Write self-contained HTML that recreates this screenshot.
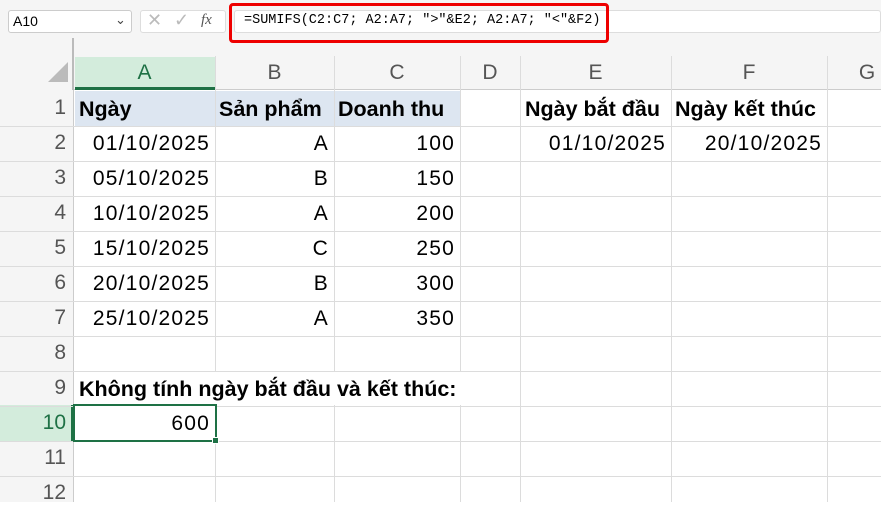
<!DOCTYPE html>
<html><head><meta charset="utf-8"><style>
body{margin:0;width:881px;height:502px;overflow:hidden;background:#fff;font-family:"Liberation Sans",sans-serif;position:relative}
.a{position:absolute;box-sizing:border-box}
.t{position:absolute;font-size:21px;line-height:36px;white-space:nowrap;color:#000;letter-spacing:1.2px}
.b{font-weight:bold;letter-spacing:0;font-size:21.5px}
.h{position:absolute;font-size:21px;color:#555;text-align:center;line-height:34px}
</style></head><body>
<div class="a" style="left:0;top:0;width:881px;height:56px;background:#f5f5f5"></div>
<div class="a" style="left:8px;top:10px;width:124px;height:23px;background:#fff;border:1px solid #ccc;border-radius:3px"></div>
<div class="t" style="left:13px;top:4px;font-size:14px;line-height:34px;letter-spacing:0">A10</div>
<div class="t" style="left:115px;top:3px;font-size:13px;line-height:34px;color:#444;letter-spacing:0">&#8964;</div>
<div class="a" style="left:140px;top:10px;width:86px;height:23px;background:#fff;border:1px solid #ddd;border-radius:3px"></div>
<div class="t" style="left:147px;top:3px;font-size:18px;line-height:34px;color:#bbb;letter-spacing:0">✕</div>
<div class="t" style="left:174px;top:3px;font-size:18px;line-height:34px;color:#bbb;letter-spacing:0">✓</div>
<div class="t" style="left:201px;top:3px;font-size:15px;line-height:34px;color:#555;font-style:italic;font-family:'Liberation Serif',serif;letter-spacing:0">fx</div>
<div class="a" style="left:234px;top:10px;width:647px;height:23px;background:#fff;border:1px solid #ddd;border-radius:3px"></div>
<div class="a" style="left:229px;top:3px;width:380px;height:40px;border:3px solid #e00;border-radius:4px"></div>
<div class="t" style="left:244px;top:4px;font-size:13.5px;line-height:34px;font-family:'Liberation Mono',monospace;letter-spacing:0">=SUMIFS(C2:C7; A2:A7; "&gt;"&amp;E2; A2:A7; "&lt;"&amp;F2)</div>
<div class="a" style="left:0;top:56px;width:881px;height:34px;background:#f5f5f5;border-bottom:1px solid #ccc"></div>
<div class="a" style="left:0;top:56px;width:74px;height:446px;background:#f5f5f5;border-right:1px solid #ccc"></div>
<div class="a" style="left:72px;top:38px;width:2px;height:52px;background:#bbb"></div>
<div class="a" style="left:48px;top:62px;width:0;height:0;border-left:20px solid transparent;border-bottom:20px solid #bbb"></div>
<div class="a" style="left:75px;top:57px;width:140px;height:33px;background:#d3ecdc;border-bottom:3px solid #1e7145"></div>
<div class="a" style="left:0;top:405px;width:74px;height:36px;background:#d3ecdc;border-right:3px solid #1e7145"></div>
<div class="a" style="left:75px;top:91px;width:385px;height:35px;background:#dde6f1"></div>
<div class="h" style="left:74px;top:56px;width:141px;color:#1e7145">A</div>
<div class="h" style="left:215px;top:56px;width:119px">B</div>
<div class="h" style="left:334px;top:56px;width:126px">C</div>
<div class="h" style="left:460px;top:56px;width:60px">D</div>
<div class="h" style="left:520px;top:56px;width:151px">E</div>
<div class="h" style="left:671px;top:56px;width:156px">F</div>
<div class="h" style="left:827px;top:56px;width:80px">G</div>
<div class="a" style="left:215px;top:56px;width:1px;height:446px;background:#dcdcdc"></div>
<div class="a" style="left:334px;top:56px;width:1px;height:446px;background:#dcdcdc"></div>
<div class="a" style="left:460px;top:56px;width:1px;height:446px;background:#dcdcdc"></div>
<div class="a" style="left:520px;top:56px;width:1px;height:446px;background:#dcdcdc"></div>
<div class="a" style="left:671px;top:56px;width:1px;height:446px;background:#dcdcdc"></div>
<div class="a" style="left:827px;top:56px;width:1px;height:446px;background:#dcdcdc"></div>
<div class="a" style="left:0;top:126px;width:881px;height:1px;background:#dcdcdc"></div>
<div class="a" style="left:0;top:161px;width:881px;height:1px;background:#dcdcdc"></div>
<div class="a" style="left:0;top:196px;width:881px;height:1px;background:#dcdcdc"></div>
<div class="a" style="left:0;top:231px;width:881px;height:1px;background:#dcdcdc"></div>
<div class="a" style="left:0;top:266px;width:881px;height:1px;background:#dcdcdc"></div>
<div class="a" style="left:0;top:301px;width:881px;height:1px;background:#dcdcdc"></div>
<div class="a" style="left:0;top:336px;width:881px;height:1px;background:#dcdcdc"></div>
<div class="a" style="left:0;top:371px;width:881px;height:1px;background:#dcdcdc"></div>
<div class="a" style="left:0;top:406px;width:881px;height:1px;background:#dcdcdc"></div>
<div class="a" style="left:0;top:441px;width:881px;height:1px;background:#dcdcdc"></div>
<div class="a" style="left:0;top:476px;width:881px;height:1px;background:#dcdcdc"></div>
<div class="h" style="left:0;top:91px;width:66px;text-align:right">1</div>
<div class="h" style="left:0;top:126px;width:66px;text-align:right">2</div>
<div class="h" style="left:0;top:161px;width:66px;text-align:right">3</div>
<div class="h" style="left:0;top:196px;width:66px;text-align:right">4</div>
<div class="h" style="left:0;top:231px;width:66px;text-align:right">5</div>
<div class="h" style="left:0;top:266px;width:66px;text-align:right">6</div>
<div class="h" style="left:0;top:301px;width:66px;text-align:right">7</div>
<div class="h" style="left:0;top:336px;width:66px;text-align:right">8</div>
<div class="h" style="left:0;top:371px;width:66px;text-align:right">9</div>
<div class="h" style="left:0;top:406px;width:66px;text-align:right;color:#1e7145">10</div>
<div class="h" style="left:0;top:441px;width:66px;text-align:right">11</div>
<div class="h" style="left:0;top:476px;width:66px;text-align:right">12</div>
<div class="t b" style="left:79px;top:91px">Ngày</div>
<div class="t b" style="left:219px;top:91px">Sản phẩm</div>
<div class="t b" style="left:338px;top:91px">Doanh thu</div>
<div class="t b" style="left:525px;top:91px">Ngày bắt đầu</div>
<div class="t b" style="left:675px;top:91px">Ngày kết thúc</div>
<div class="t" style="left:75px;width:135px;text-align:right;top:126px">01/10/2025</div>
<div class="t" style="left:75px;width:135px;text-align:right;top:161px">05/10/2025</div>
<div class="t" style="left:75px;width:135px;text-align:right;top:196px">10/10/2025</div>
<div class="t" style="left:75px;width:135px;text-align:right;top:231px">15/10/2025</div>
<div class="t" style="left:75px;width:135px;text-align:right;top:266px">20/10/2025</div>
<div class="t" style="left:75px;width:135px;text-align:right;top:301px">25/10/2025</div>
<div class="t" style="left:215px;width:114px;text-align:right;top:126px">A</div>
<div class="t" style="left:215px;width:114px;text-align:right;top:161px">B</div>
<div class="t" style="left:215px;width:114px;text-align:right;top:196px">A</div>
<div class="t" style="left:215px;width:114px;text-align:right;top:231px">C</div>
<div class="t" style="left:215px;width:114px;text-align:right;top:266px">B</div>
<div class="t" style="left:215px;width:114px;text-align:right;top:301px">A</div>
<div class="t" style="left:334px;width:121px;text-align:right;top:126px">100</div>
<div class="t" style="left:334px;width:121px;text-align:right;top:161px">150</div>
<div class="t" style="left:334px;width:121px;text-align:right;top:196px">200</div>
<div class="t" style="left:334px;width:121px;text-align:right;top:231px">250</div>
<div class="t" style="left:334px;width:121px;text-align:right;top:266px">300</div>
<div class="t" style="left:334px;width:121px;text-align:right;top:301px">350</div>
<div class="t" style="left:520px;width:146px;text-align:right;top:126px">01/10/2025</div>
<div class="t" style="left:671px;width:151px;text-align:right;top:126px">20/10/2025</div>
<div class="a" style="left:75px;top:372px;width:400px;height:33px;background:#fff"></div>
<div class="t b" style="left:79px;top:371px">Không tính ngày bắt đầu và kết thúc:</div>
<div class="a" style="left:73px;top:404px;width:144px;height:38px;border:2px solid #1e7145;background:#fff"></div>
<div class="a" style="left:212px;top:437px;width:7px;height:7px;background:#1e7145;border:1px solid #fff"></div>
<div class="t" style="left:75px;width:135px;text-align:right;top:406px">600</div>
</body></html>
